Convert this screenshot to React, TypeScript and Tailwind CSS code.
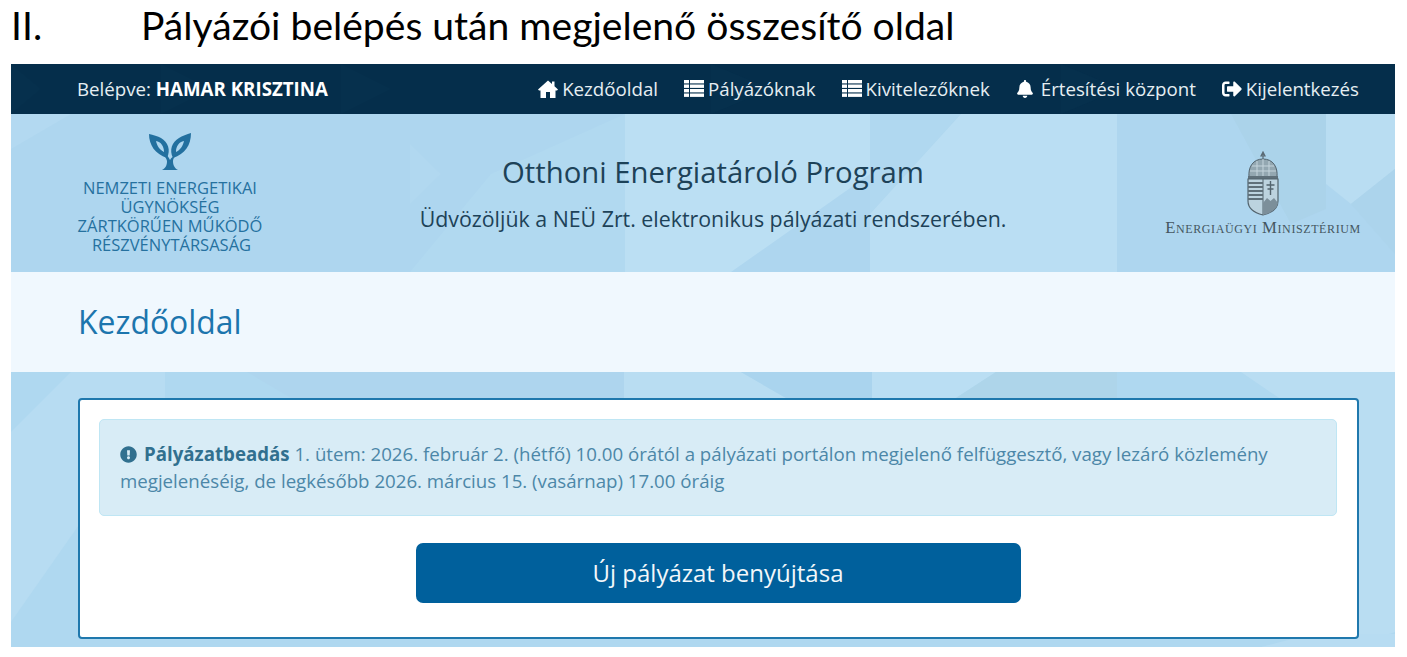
import type { ReactNode } from "react";
import { FaBell, FaSignOutAlt, FaExclamationCircle } from "react-icons/fa";

const HomeIcon = () => (
  <svg width="20" height="18" viewBox="0 0 20 18" className="block" fill="#fff">
    <path d="M10 0.500 L14 4 V1.500 H16.500 V6.300 L20 9.500 L19 10.500 H17.500 V18 H12 V12 H8 V18 H2.500 V10.500 H1 L0 9.500Z" />
  </svg>
);

const ListIcon = () => (
  <svg width="20" height="17" viewBox="0 0 20 17" className="block" fill="#fff">
    {[0, 4.500, 9, 13.500].map((y) => (
      <g key={y}>
        <rect x="0" y={y} width="5" height="3.400" />
        <rect x="6" y={y} width="14" height="3.400" />
      </g>
    ))}
  </svg>
);

const Leaves = () => (
  <svg width="42" height="38" viewBox="0 0 42 38" className="block">
    <path d="M0 1 C0 12 6 21 18 25 C22 17 19 9 12 5 C9 3 4 2 0 1Z M7 8 C12 9 15 13 15 19 C11 17 8 13 7 8Z" fill="#23709f" fillRule="evenodd" />
    <path d="M42 0 C42 12 36 21 24 25 C20 17 23 9 30 5 C33 3 38 1 42 0Z M35 8 C30 9 27 13 27 19 C31 17 34 13 35 8Z" fill="#23709f" fillRule="evenodd" />
    <path d="M9 15 C13 21 17 23 18 28 C18 32 17 35 13 37 L29 37 C25 35 24 31 24 28 C24 25 26 23 29 21 C25 22 22 25 21 27 C19 22 14 19 9 15Z" fill="#23709f" />
  </svg>
);

const Crest = () => (
  <svg width="36" height="66" viewBox="0 0 36 66" className="block" fill="none">
    <path d="M18 1 L16 5 L20 5Z M18 1 L18 8" stroke="#5b6b75" strokeWidth="1.200" />
    <path d="M4 26 C3 16 8 8 18 8 C28 8 33 16 32 26Z" fill="#93a7b1" stroke="#53646e" strokeWidth="1" />
    <path d="M7 15 H29 M5 20 H31 M12 10 V25 M18 8 V25 M24 10 V25" stroke="#c4d4dc" strokeWidth="1" />
    <rect x="3" y="25" width="30" height="3" fill="#5f707a" />
    <path d="M3 28 H33 V50 C33 58 26 62 18 64 C10 62 3 58 3 50Z" fill="#bcd3df" stroke="#53646e" strokeWidth="1.200" />
    <path d="M18 28 V64" stroke="#53646e" strokeWidth="1" />
    <path d="M3 32 H18 M3 36 H18 M3 40 H18 M3 44 H18 M3 48 H18" stroke="#5f707a" strokeWidth="2" />
    <path d="M25.500 30 V44 M21.500 34 H29.500 M22.500 38 H28.500" stroke="#53646e" strokeWidth="1.400" />
    <path d="M18 62 V52 L22 47 L25.500 50 L29 47 L33 52 C32 58 26 62 18 64Z" fill="#7c8f9a" />
  </svg>
);

const NavItem = ({ icon, label, gap = "gap-[4px]" }: { icon: ReactNode; label: string; gap?: string }) => (
  <a className={`flex items-center ${gap} text-[18.700px] text-[#e6eef3]`}>
    {icon}
    <span>{label}</span>
  </a>
);

const Pattern = ({ points, fill }: { points: string; fill: string }) => <polygon points={points} fill={fill} />;

export default function App() {
  return (
    <div className="h-[657px] w-[1407px] overflow-hidden bg-white font-['Open_Sans',sans-serif]">
      <div className="flex h-[64px] items-start pl-[11px] pt-[2px] font-['Lato',sans-serif] text-[39.100px] leading-[46px] text-black">
        <span className="w-[130px]">II.</span>
        <span>Pályázói belépés után megjelenő összesítő oldal</span>
      </div>

      <div className="relative ml-[11px] flex h-[583px] w-[1384px] flex-col bg-[#b2d9f0]">
        <nav className="relative flex h-[50px] items-center justify-between bg-[#052e4b] pl-[66px] pr-[36px] text-[#e6eef3]">
          <svg className="absolute inset-0 h-full w-full" viewBox="0 0 1384 50" preserveAspectRatio="none">
            <Pattern points="0,0 30,25 0,50" fill="#06304d" />
            <Pattern points="150,0 200,25 150,50" fill="#06304d" />
            <Pattern points="330,0 380,25 330,50" fill="#06304d" />
            <Pattern points="700,0 760,25 700,50" fill="#06304d" />
            <Pattern points="1050,0 1110,25 1050,50" fill="#06304d" />
          </svg>
          <div className="relative text-[18.700px]">
            Belépve: <b className="font-bold text-white">HAMAR KRISZTINA</b>
          </div>
          <div className="relative flex items-center gap-[26px]">
            <NavItem icon={<HomeIcon />} label="Kezdőoldal" />
            <NavItem icon={<ListIcon />} label="Pályázóknak" />
            <NavItem icon={<ListIcon />} label="Kivitelezőknek" />
            <NavItem icon={<FaBell size={18} color="#fff" />} label="Értesítési központ" gap="gap-[7px]" />
            <NavItem icon={<FaSignOutAlt size={20} color="#fff" />} label="Kijelentkezés" />
          </div>
        </nav>

        <header className="relative flex h-[158px] items-start bg-[#aed6ef]">
          <svg className="absolute inset-0 h-full w-full" viewBox="0 0 1384 158" preserveAspectRatio="none">
            <Pattern points="0,0 60,0 0,35" fill="#b3d9f1" />
            <Pattern points="399,90 430,60 399,30" fill="#b1d8f0" />
            <Pattern points="399,158 480,60 614,0 614,158" fill="#b1d9f0" />
            <Pattern points="614,0 859,0 859,60 720,158 614,158" fill="#bbdff3" />
            <Pattern points="859,0 950,0 859,100" fill="#b0d8f0" />
            <Pattern points="950,0 1106,0 1106,158 859,158 859,100" fill="#badef3" />
            <Pattern points="1220,0 1315,0 1315,95 1280,110" fill="#abd3ea" />
            <Pattern points="1315,0 1384,0 1384,55 1340,90 1315,70" fill="#b9ddf2" />
            <Pattern points="1384,55 1340,90 1384,140" fill="#acd4ec" />
          </svg>
          <div className="relative flex w-[318px] flex-col items-center pt-[19px] text-center">
            <Leaves />
            <div className="mt-[7px] text-[16.500px] font-medium leading-[19px] text-[#25719f]">
              <div>NEMZETI ENERGETIKAI</div>
              <div>ÜGYNÖKSÉG</div>
              <div>ZÁRTKÖRŰEN MŰKÖDŐ</div>
              <div className="ml-[3px]">RÉSZVÉNYTÁRSASÁG</div>
            </div>
          </div>
          <div className="relative ml-[-11px] flex w-[790px] flex-col items-center pt-[39px] text-[#1d4258]">
            <div className="text-[29.300px] leading-[38px]">Otthoni Energiatároló Program</div>
            <div className="mt-[13px] text-[21.350px] leading-[30px]">Üdvözöljük a NEÜ Zrt. elektronikus pályázati rendszerében.</div>
          </div>
          <div className="relative flex flex-1 flex-col items-center pt-[37px]">
            <div className="ml-[23px]"><Crest /></div>
            <div className="ml-[23px] mt-[2px] whitespace-nowrap font-['Liberation_Serif',serif] text-[16.700px] leading-[18px] tracking-[0.6px] text-[#45565f] [font-variant:small-caps]">
              Energiaügyi Minisztérium
            </div>
          </div>
        </header>

        <div className="flex h-[100px] items-center bg-[#f0f8fe] pl-[67px] text-[31.900px] text-[#1c75ad]">Kezdőoldal</div>

        <main className="relative flex-1 overflow-hidden bg-[#afd8f0] px-[67px] pt-[26px]">
          <svg className="absolute inset-0 h-full w-full" viewBox="0 0 1384 275" preserveAspectRatio="none">
            <Pattern points="0,60 60,0 154,0 154,30 0,250" fill="#b7dcf2" />
            <Pattern points="236,0 613,0 613,26 280,26" fill="#aed5ee" />
            <Pattern points="613,0 730,0 775,26 613,26" fill="#b9ddf2" />
            <Pattern points="730,0 861,0 861,26 775,26" fill="#aad4ee" />
            <Pattern points="861,0 985,0 945,26 861,26" fill="#badef3" />
            <Pattern points="985,0 1106,0 1106,26 945,26" fill="#aed5ea" />
            <Pattern points="1230,0 1384,0 1384,260 1340,275 1318,60" fill="#b9ddf2" />
            <Pattern points="1250,275 1300,262 1384,262 1384,275" fill="#b7dcf2" />
          </svg>
          <section className="relative flex h-[241px] w-[1281px] flex-col rounded-[4px] border-2 border-[#1f78ad] bg-white pl-[19px] pr-[20px] pt-[19px]">
            <div className="h-[97px] rounded-[5px] border border-[#bfe6f4] bg-[#d8ecf6] px-[20px] pt-[20px] text-[18.680px] leading-[27px] text-[#4c87a8]">
              <FaExclamationCircle className="mr-[7px] inline-block align-[-2px] text-[#31708f]" size={17} />
              <b className="font-bold text-[#31708f]">Pályázatbeadás</b> 1. ütem: 2026. február 2. (hétfő) 10.00 órától a pályázati portálon megjelenő felfüggesztő, vagy lezáró közlemény megjelenéséig, de legkésőbb 2026. március 15. (vasárnap) 17.00 óráig
            </div>
            <button className="mx-auto mt-[27px] flex h-[60px] w-[605px] items-center justify-center rounded-[7px] bg-[#00609c] text-[24px] text-[#f2f7fa]">
              Új pályázat benyújtása
            </button>
          </section>
        </main>
      </div>
    </div>
  );
}
